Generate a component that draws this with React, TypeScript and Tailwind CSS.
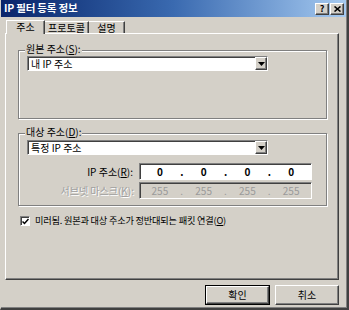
import React from "react";

const raised =
  "border border-t-white border-l-white border-r-[#404040] border-b-[#404040] shadow-[inset_-1px_-1px_0_#808080]";
const sunken =
  "border border-t-[#808080] border-l-[#808080] border-r-white border-b-white shadow-[inset_1px_1px_0_#404040]";

function U({ c }: { c: string }) {
  return <span className="underline underline-offset-1">{c}</span>;
}

function Combo({ text }: { text: string }) {
  return (
    <div className={`w-[241px] h-[15px] bg-white flex items-center ${sunken}`}>
      <div className="flex-1 pl-[3px] text-[10px] leading-none text-black">{text}</div>
      <div className={`w-[12px] h-[13px] bg-[#d4d0c8] flex items-center justify-center ${raised}`}>
        <svg width="7" height="4" viewBox="0 0 7 4">
          <path d="M0 0h7L3.5 4z" fill="#000" />
        </svg>
      </div>
    </div>
  );
}

function IpBox({ vals, disabled }: { vals: string[]; disabled?: boolean }) {
  return (
    <div
      className={`w-[173px] h-[17px] flex items-center ${sunken} ${
        disabled ? "bg-[#d4d0c8]" : "bg-white"
      }`}
    >
      {vals.map((v, i) => (
        <React.Fragment key={i}>
          <div
            className={`flex-1 text-center text-[10px] leading-none ${
              disabled ? "text-[#9a9a9a]" : "text-black font-bold"
            }`}
          >
            {v}
          </div>
          {i < 3 && (
            <div
              className={`w-[4px] text-center text-[10px] leading-none ${
                disabled ? "text-[#9a9a9a]" : "text-black font-bold"
              }`}
            >
              .
            </div>
          )}
        </React.Fragment>
      ))}
    </div>
  );
}

function Group({
  label,
  h,
  className,
  children,
}: {
  label: React.ReactNode;
  h: string;
  className?: string;
  children?: React.ReactNode;
}) {
  return (
    <div
      className={`relative w-[309px] ${h} border border-[#808080] shadow-[1px_1px_0_#fff,inset_1px_1px_0_#fff] ${
        className ?? ""
      }`}
    >
      <div className="absolute left-[6px] top-[-7px] px-[1px] bg-[#d4d0c8] text-[10px] leading-[10px] text-black">
        {label}
      </div>
      {children}
    </div>
  );
}

export default function App() {
  return (
    <div className="w-[349px] h-[310px] bg-[#d4d0c8] border-l border-l-[#d4d0c8] border-r-2 border-b-2 border-r-[#404040] border-b-[#404040] font-['Noto_Sans_CJK_KR','Noto_Sans',sans-serif] text-black overflow-hidden">
      <div className="border-r border-b border-r-[#808080] border-b-[#808080] h-full flex flex-col">
        {/* title bar */}
        <div className="h-[17px] flex items-center bg-gradient-to-r from-[#0a246a] via-[#3a6ab0] to-[#a6caf0] pl-[3px] pr-[2px]">
          <div className="flex-1 text-white font-bold text-[10.5px] leading-none tracking-[-0.2px]">
            IP 필터 등록 정보
          </div>
          <div className="flex gap-[1px]">
            <div className={`w-[14px] h-[12px] bg-[#d4d0c8] flex items-center justify-center text-[9px] font-bold leading-none ${raised}`}>
              ?
            </div>
            <div className={`w-[14px] h-[12px] bg-[#d4d0c8] flex items-center justify-center ${raised}`}>
              <svg width="7" height="6" viewBox="0 0 7 6">
                <path d="M0.5 0.5L6.5 5.5M6.5 0.5L0.5 5.5" stroke="#000" strokeWidth="1.6" />
              </svg>
            </div>
          </div>
        </div>

        {/* tabs */}
        <div className="flex items-end h-[16px] pl-[5px]">
          <div className="relative z-10 h-[14px] w-[39px] bg-[#d4d0c8] border-t border-l border-t-white border-l-white border-r border-r-[#404040] shadow-[inset_-1px_0_0_#808080] flex items-center justify-center text-[10px] leading-none mb-[-1px] pb-[1px]">
            주소
          </div>
          <div className="h-[12px] w-[44px] border-t border-t-white border-r border-r-[#404040] shadow-[inset_-1px_0_0_#808080] flex items-center justify-center text-[10px] leading-none">
            프로토콜
          </div>
          <div className="h-[12px] w-[36px] border-t border-t-white border-r border-r-[#404040] shadow-[inset_-1px_0_0_#808080] flex items-center justify-center text-[10px] leading-none">
            설명
          </div>
        </div>

        {/* panel */}
        <div className={`ml-[4px] w-[334px] h-[247px] bg-[#d4d0c8] pl-[12px] pt-[16px] ${raised}`}>
          <Group
            h="h-[69px]"
            label={
              <>
                원본 주소(<U c="S" />):
              </>
            }
          >
            <div className="pl-[8px] pt-[5px]">
              <Combo text="내 IP 주소" />
            </div>
          </Group>

          <Group
            h="h-[73px]"
            className="mt-[14px]"
            label={
              <>
                대상 주소(<U c="D" />):
              </>
            }
          >
            <div className="pl-[8px] pt-[6px] flex flex-col">
              <Combo text="특정 IP 주소" />
              <div className="flex items-center mt-[8px]">
                <div className="w-[112px] text-right text-[10px] leading-none pr-[6px]">
                  IP 주소(<U c="R" />):
                </div>
                <IpBox vals={["0", "0", "0", "0"]} />
              </div>
              <div className="flex items-center mt-[2px]">
                <div className="w-[112px] text-right text-[10px] leading-none pr-[5px] text-[#a0a0a0] [text-shadow:1px_1px_0_#fff]">
                  서브넷 마스크(<U c="K" />):
                </div>
                <IpBox vals={["255", "255", "255", "255"]} disabled />
              </div>
            </div>
          </Group>

          <div className="flex items-center mt-[10px] ml-[2px] gap-[5px]">
            <div className={`w-[10px] h-[10px] bg-white flex items-center justify-center ${sunken}`}>
              <svg width="7" height="7" viewBox="0 0 7 7">
                <path d="M0.5 3.5L2.5 5.5L6.5 1" stroke="#000" strokeWidth="1.5" fill="none" />
              </svg>
            </div>
            <div className="text-[9.2px] leading-none tracking-[-0.2px]">
              미러됨. 원본과 대상 주소가 정반대되는 패킷 연결(<U c="O" />)
            </div>
          </div>
        </div>

        {/* buttons */}
        <div className="flex justify-end gap-[5px] pr-[7px] mt-[5px]">
          <div className="w-[65px] h-[20px] border border-black">
            <div className={`w-full h-full bg-[#d4d0c8] flex items-center justify-center text-[10px] leading-none ${raised}`}>
              확인
            </div>
          </div>
          <div className={`w-[64px] h-[20px] bg-[#d4d0c8] flex items-center justify-center text-[10px] leading-none ${raised}`}>
            취소
          </div>
        </div>
      </div>
    </div>
  );
}
